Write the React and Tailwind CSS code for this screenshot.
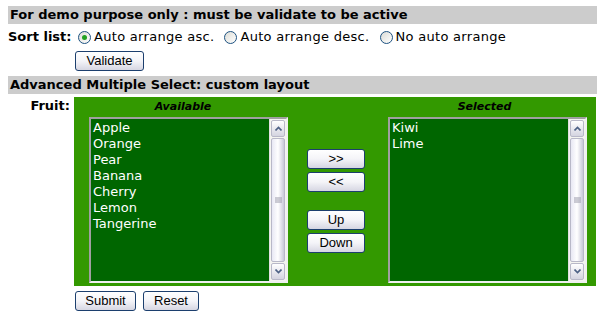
import React, { useState } from "react";

const available = ["Apple", "Orange", "Pear", "Banana", "Cherry", "Lemon", "Tangerine"];
const chosen = ["Kiwi", "Lime"];

// XP-style push button
const XpButton = ({ children, className = "" }) => (
  <button
    type="button"
    className={`h-[20px] rounded-[3px] border border-[#1c3f6e] bg-gradient-to-b from-white via-[#f4f4f8] to-[#d6d6e2] text-[13px] leading-[18px] text-black font-['Liberation_Sans',Arial,sans-serif] ${className}`}
  >
    {children}
  </button>
);

const Radio = ({ checked, label }) => (
  <label className="flex items-center mr-[10px] tracking-[0.3px] whitespace-nowrap">
    <span className="w-[13px] h-[13px] rounded-full border border-[#1d5281] bg-gradient-to-br from-[#dcdcd6] to-white flex items-center justify-center mr-[3px]">
      {checked && <span className="w-[5px] h-[5px] rounded-full bg-[#21a121]" />}
    </span>
    {label}
  </label>
);

const ScrollBar = () => (
  <div className="w-[17px] h-full flex flex-col bg-[#f4f4f0] border-l border-[#e0e0e0]">
    <div className="h-[17px] m-px rounded-[2px] border border-[#b8b8c8] bg-gradient-to-b from-white to-[#d4d4e0] flex items-center justify-center">
      <svg width="7" height="5" viewBox="0 0 7 5">
        <path d="M0.5 4.5 L3.5 1.5 L6.5 4.5" stroke="#4d6185" strokeWidth="1.6" fill="none" />
      </svg>
    </div>
    <div className="flex-1 mx-px rounded-[2px] border border-[#b8b8c8] bg-gradient-to-r from-[#e8e8f4] via-white to-[#c8c8d8] flex items-center justify-center">
      <svg width="7" height="7" viewBox="0 0 7 7">
        <path d="M0 1 H7 M0 3 H7 M0 5 H7" stroke="#9a9aaa" strokeWidth="1" />
      </svg>
    </div>
    <div className="h-[17px] m-px rounded-[2px] border border-[#b8b8c8] bg-gradient-to-b from-white to-[#d4d4e0] flex items-center justify-center">
      <svg width="7" height="5" viewBox="0 0 7 5">
        <path d="M0.5 0.5 L3.5 3.5 L6.5 0.5" stroke="#4d6185" strokeWidth="1.6" fill="none" />
      </svg>
    </div>
  </div>
);

const ListBox = ({ items }) => (
  <div className="w-[199px] h-[166px] flex border-2 border-t-[#a0a0a0] border-l-[#a0a0a0] border-b-[#f0f0f0] border-r-[#f0f0f0] bg-[#006600]">
    <ul className="flex-1 pl-[2px] pt-px text-white text-[13px] leading-[16px]">
      {items.map((item) => (
        <li key={item}>{item}</li>
      ))}
    </ul>
    <ScrollBar />
  </div>
);

export default function App() {
  const [sort] = useState("asc");

  return (
    <div className="pt-[6px] pl-[8px] w-[597px] text-[13px] text-black font-['DejaVu_Sans',Verdana,sans-serif] bg-white min-h-[318px]">
      {/* Sort section */}
      <div className="h-[18px] bg-[#cccccc] font-bold leading-[18px] pl-[2px]">
        For demo purpose only : must be validate to be active
      </div>
      <div className="flex pt-[3px]">
        <div className="w-[64px] shrink-0 whitespace-nowrap text-right font-bold pr-[2px] leading-[20px]">Sort list:</div>
        <div className="pl-[2px]">
          <div className="flex h-[20px] items-center pl-[4px] mb-[4px]">
            <Radio checked={sort === "asc"} label="Auto arrange asc." />
            <Radio checked={sort === "desc"} label="Auto arrange desc." />
            <Radio checked={sort === "none"} label="No auto arrange" />
          </div>
          <XpButton className="w-[69px] ml-px">Validate</XpButton>
        </div>
      </div>

      {/* Multiple select section */}
      <div className="h-[18px] bg-[#cccccc] font-bold leading-[18px] pl-[2px] mt-[5px]">
        Advanced Multiple Select: custom layout
      </div>
      <div className="flex mt-[3px]">
        <div className="w-[64px] shrink-0 text-right font-bold pr-[2px] leading-[18px]">Fruit:</div>
        <div className="ml-[2px] w-[522px] h-[189px] bg-[#339900] flex">
          <div className="w-[218px]">
            <div className="h-[20px] leading-[20px] text-center text-[11px] font-bold italic">Available</div>
            <div className="pl-[15px]">
              <ListBox items={available} />
            </div>
          </div>
          <div className="w-[88px] flex flex-col items-center pt-[52px]">
            <XpButton className="w-[58px] mb-[3px]">&gt;&gt;</XpButton>
            <XpButton className="w-[58px] mb-[18px]">&lt;&lt;</XpButton>
            <XpButton className="w-[58px] mb-[3px]">Up</XpButton>
            <XpButton className="w-[58px]">Down</XpButton>
          </div>
          <div className="w-[209px]">
            <div className="h-[20px] leading-[20px] text-center text-[11px] font-bold italic">Selected</div>
            <div className="pl-[8px]">
              <ListBox items={chosen} />
            </div>
          </div>
        </div>
      </div>
      <div className="flex mt-[5px] pl-[67px] gap-[7px]">
        <XpButton className="w-[61px]">Submit</XpButton>
        <XpButton className="w-[56px]">Reset</XpButton>
      </div>
    </div>
  );
}
